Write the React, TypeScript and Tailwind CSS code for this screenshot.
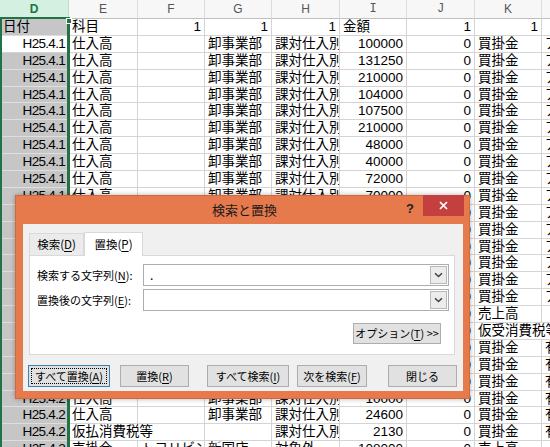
import React from 'react';

const COLW = ['w-[69px]', 'w-[69px]', 'w-[67px]', 'w-[67px]', 'w-[68px]', 'w-[67px]', 'w-[68px]', 'w-[67px]', 'w-[40px]'];
const LETTERS = ['D', 'E', 'F', 'G', 'H', 'I', 'J', 'K', ''];

type Cell = { t: string; w: string; col: number };

function mk(vals: string[], spans: Record<number, string> = {}): Cell[] {
  const out: Cell[] = [];
  for (let i = 0; i < vals.length; i++) {
    if (spans[i]) {
      out.push({ t: vals[i], w: spans[i], col: i });
      i++;
    } else {
      out.push({ t: vals[i], w: COLW[i], col: i });
    }
  }
  return out;
}

const base = (d: string, n: string, l: string) => mk([d, '仕入高', '', '卸事業部', '課対仕入別', n, '0', '買掛金', l]);

const ROWS: Cell[][] = [
  mk(['日付', '科目', '1', '1', '1', '金額', '1', '1', '']),
  base('H25.4.1', '100000', 'アイ'),
  base('H25.4.1', '131250', 'アイ'),
  base('H25.4.1', '210000', 'アイ'),
  base('H25.4.1', '104000', 'アイ'),
  base('H25.4.1', '107500', 'アイ'),
  base('H25.4.1', '210000', 'アイ'),
  base('H25.4.1', '48000', 'アイ'),
  base('H25.4.1', '40000', 'アイ'),
  base('H25.4.1', '72000', 'アイ'),
  base('H25.4.1', '70000', 'アイ'),
  base('H25.4.1', '65000', 'アイ'),
  base('H25.4.1', '120000', 'アイ'),
  base('H25.4.1', '84000', 'アイ'),
  base('H25.4.1', '56000', 'アイ'),
  base('H25.4.1', '98000', 'アイ'),
  base('H25.4.1', '150000', 'アイ'),
  mk(['H25.4.1', '売掛金', '', '卸事業部', '対象外', '300000', '0', '売上高', '']),
  mk(['H25.4.1', '売掛金', '', '卸事業部', '課税売上', '24000', '0', '仮受消費税等', ''], { 7: 'w-[107px]' }),
  base('H25.4.2', '30000', '有限'),
  base('H25.4.2', '45000', '有限'),
  base('H25.4.2', '52000', '有限'),
  base('H25.4.2', '10000', '有限'),
  base('H25.4.2', '24600', '有限'),
  mk(['H25.4.2', '仮払消費税等', '', '', '課対仕入別', '2130', '0', '買掛金', '有限'], { 1: 'w-[136px]' }),
  mk(['H25.4.2', '売掛金', 'トヨリビング', '新国店', '対象外', '108000', '0', '売上高', '']),
];

function SheetCell({ c, row }: { c: Cell; row: number }) {
  const right = /^[0-9]+$/.test(c.t) || c.t.startsWith('H25');
  const isD = c.col === 0;
  const cls = isD
    ? row === 1
      ? 'bg-white border-r border-b border-[#d4d4d4]'
      : 'bg-[#c6c6c6] border-r border-b border-[#dedede]'
    : 'bg-white border-r border-b border-[#d4d4d4]';
  return (
    <div
      className={`${c.w} ${cls} shrink-0 h-full px-[3px] overflow-hidden whitespace-nowrap flex items-center leading-[16px] ${right ? 'justify-end' : 'justify-start'}`}
    >
      <span className={c.t.startsWith('H25') ? 'tracking-[-0.7px]' : ''}>{c.t}</span>
    </div>
  );
}

function Key({ k }: { k: string }) {
  return <span className="underline underline-offset-[2px]">{k}</span>;
}

function Chevron() {
  return (
    <svg width="9" height="6" viewBox="0 0 9 6">
      <path d="M1 1.2 L4.5 4.5 L8 1.2" fill="none" stroke="#404040" strokeWidth="1.5" />
    </svg>
  );
}

function Combo({ value }: { value?: string }) {
  return (
    <div className="w-[306px] h-[22px] border border-[#abadb3] bg-white flex items-stretch">
      <div className="flex-1 pl-[6px] text-[12px] leading-[20px] text-black">{value}</div>
      <div className="w-[17px] m-[1px] border border-[#b9b9b9] bg-[#ececec] flex items-center justify-center">
        <Chevron />
      </div>
    </div>
  );
}

function Btn({ w, ml, focus, children }: { w: string; ml: string; focus?: boolean; children: React.ReactNode }) {
  return (
    <div
      className={`${w} ${ml} relative h-[22px] shrink-0 flex items-center justify-center text-[11px] text-black bg-[#e1e1e1] border ${focus ? 'border-[#3c7fb1]' : 'border-[#adadad]'}`}
    >
      {focus && <div className="absolute inset-[2px] border border-dotted border-black" />}
      <span className="relative">{children}</span>
    </div>
  );
}

export default function App() {
  return (
    <div className="relative w-[550px] h-[447px] overflow-hidden bg-white font-['Liberation_Sans','Noto_Sans_CJK_JP',sans-serif] text-[13.5px] text-black">
      {/* column header */}
      <div className="flex h-[19px]">
        {LETTERS.map((l, i) =>
          i === 0 ? (
            <div
              key={i}
              className="w-[69px] shrink-0 bg-[#d3f0e0] border-b-2 border-b-[#217346] border-r border-r-[#bcdcc8] flex items-center justify-center text-[12px] font-bold text-[#217346]"
            >
              {l}
            </div>
          ) : (
            <div
              key={i}
              className={`${COLW[i]} shrink-0 bg-[#f7f7f7] border-r border-r-[#dcdcdc] border-b border-b-[#c0c0c0] flex items-center justify-center text-[12px] text-[#555] ${l === 'I' || l === 'J' ? "font-['Liberation_Mono',monospace]" : ''}`}
            >
              {l}
            </div>
          )
        )}
      </div>

      {/* rows */}
      {ROWS.map((r, ri) => (
        <div key={ri} className="flex h-[16.9px]">
          {r.map((c, ci) => (
            <SheetCell key={ci} c={c} row={ri} />
          ))}
        </div>
      ))}

      {/* column selection outline */}
      <div className="absolute left-0 top-[17px] w-[70px] bottom-0 border-l-2 border-r-[3px] border-[#217346] pointer-events-none" />
      <div className="absolute left-[66px] top-[18px] w-[6px] h-[6px] bg-[#217346] border border-white" />

      {/* dialog */}
      <div className="absolute left-[15px] top-[195px] w-[455px] h-[204px] bg-[#e67a4d] border border-[#cf6a40] shadow-[0_0_5px_rgba(0,0,0,0.3)] flex flex-col font-['Noto_Sans_CJK_JP',sans-serif]">
        <div className="relative h-[28px] shrink-0 flex items-center justify-center">
          <span className="text-[13px] text-[#1a1a1a] pl-[4px]">検索と置換</span>
          <span className="absolute left-[390px] top-[3px] text-[13px] font-bold text-[#222] font-['Liberation_Sans',sans-serif]">?</span>
          <div className="absolute right-[5px] top-[-1px] w-[41px] h-[21px] bg-[#c4403f] flex items-center justify-center">
            <svg width="9" height="9" viewBox="0 0 9 9">
              <path d="M1 1 L8 8 M8 1 L1 8" stroke="#fff" strokeWidth="1.7" />
            </svg>
          </div>
        </div>
        <div className="ml-[7px] mr-[6px] mb-[7px] flex-1 bg-[#f0f0f0] flex flex-col">
          {/* tabs */}
          <div className="ml-[6px] mt-[8px] h-[23px] flex items-end">
            <div className="w-[55px] h-[22px] border border-b-0 border-[#d9d9d9] bg-[#ebebeb] flex items-center justify-center text-[11.5px] text-black">
              検索(<Key k="D" />)
            </div>
            <div className="relative z-10 w-[59px] h-[24px] -mb-px border border-b-0 border-[#d9d9d9] bg-white flex items-center justify-center text-[11.5px] text-black">
              置換(<Key k="P" />)
            </div>
          </div>
          {/* panel */}
          <div className="ml-[6px] w-[426px] h-[100px] border border-[#d9d9d9] bg-white flex flex-col pt-[8px]">
            <div className="flex items-center h-[22px]">
              <div className="w-[113px] pl-[7px] text-[11px] text-black whitespace-nowrap">
                検索する文字列(<Key k="N" />):
              </div>
              <Combo value="." />
            </div>
            <div className="flex items-center h-[22px] mt-[3px]">
              <div className="w-[113px] pl-[7px] text-[11px] text-black whitespace-nowrap">
                置換後の文字列(<Key k="E" />):
              </div>
              <Combo />
            </div>
            <div className="flex justify-end pr-[13px] mt-[12px]">
              <div className="w-[88px] h-[21px] bg-[#e1e1e1] border border-[#adadad] flex items-center justify-center text-[11px] text-black">
                オプション(<Key k="T" />) &gt;&gt;
              </div>
            </div>
          </div>
          {/* buttons */}
          <div className="flex mt-[10px]">
            <Btn w="w-[82px]" ml="ml-[5px]" focus>
              すべて置換(<Key k="A" />)
            </Btn>
            <Btn w="w-[69px]" ml="ml-[10px]">
              置換(<Key k="R" />)
            </Btn>
            <Btn w="w-[82px]" ml="ml-[18px]">
              すべて検索(<Key k="I" />)
            </Btn>
            <Btn w="w-[70px]" ml="ml-[8px]">
              次を検索(<Key k="F" />)
            </Btn>
            <Btn w="w-[69px]" ml="ml-[21px]">
              閉じる
            </Btn>
          </div>
        </div>
      </div>
    </div>
  );
}
